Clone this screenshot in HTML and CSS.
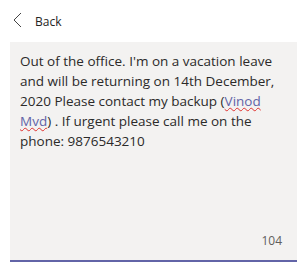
FILE: index.html
```html
<!DOCTYPE html>
<html>
<head>
<meta charset="utf-8">
<link rel="stylesheet" href="styles.css">
</head>
<body>
<div class="page">
  <div class="back">
    <svg class="chev" width="9" height="16" viewBox="0 0 9 16"><path d="M8 1 L1 8 L8 15" fill="none" stroke="#444" stroke-width="1"/></svg>
    <span class="back-label">Back</span>
  </div>
  <div class="box">
    <p class="msg">Out of the office. I'm on a vacation leave and will be returning on 14th December, 2020 Please contact my backup (<span class="link">Vinod Mvd</span>) . If urgent please call me on the phone: 9876543210</p>
    <div class="count">104</div>
  </div>
</div>
</body>
</html>
```
FILE: styles.css
```css
html, body { margin: 0; padding: 0; background: #fff; }
body { font-family: "Open Sans", "Noto Sans", sans-serif; color: #252423; }
.page { padding: 0 10px; }
.back { display: flex; align-items: center; height: 42px; padding-left: 3px; }
.chev { display: block; margin-top: -2px; }
.back-label { margin-left: 13px; font-size: 12px; color: #252423; }
.box {
  background: #f3f2f1;
  border-bottom: 2px solid #6264a7;
  padding: 9px 10px 0 10px;
  display: flex; flex-direction: column;
  box-sizing: border-box;
  height: 220px;
}
.msg { margin: 0; font-size: 13.5px; line-height: 20px; flex: 1; color: #2b2a29; }
.link { color: #6264a7; text-decoration: underline wavy #e0312f; text-decoration-thickness: 1px; text-underline-offset: 1px; }
.count { text-align: right; font-size: 12px; color: #605e5c; padding: 0 5px 11px 0; }
```
